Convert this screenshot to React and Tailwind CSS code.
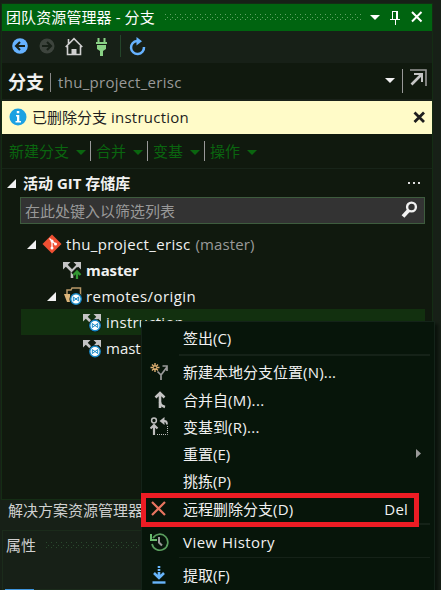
import React from "react";

function Grip({ id, className, color }) {
  return (
    <svg className={className} height="7" shapeRendering="crispEdges">
      <defs>
        <pattern id={id} width="5" height="7" patternUnits="userSpaceOnUse">
          <path d="M0 0h1v1h-1zM2 3h1v1h-1zM0 5h1v1h-1z" fill={color} />
        </pattern>
      </defs>
      <rect width="100%" height="7" fill={`url(#${id})`} />
    </svg>
  );
}

function Down({ className = "fill-[#f1f1f1]", w = 10 }) {
  return (
    <svg width={w} height="5" viewBox="0 0 10 5" className={`shrink-0 ${className}`}>
      <path d="M0 0h10L5 5z" />
    </svg>
  );
}

function Expander() {
  return (
    <svg width="9" height="9" className="shrink-0 fill-[#f1f1f1]">
      <path d="M9 0v9H0z" />
    </svg>
  );
}

function BranchArrows() {
  return (
    <g>
      <path d="M3 4l6 6M15 4l-6 6v7" stroke="#c4c4c4" strokeWidth="2.6" fill="none" />
      <path d="M0 1v7.500L7.500 1zM18 1v7.500L10.500 1z" fill="#c4c4c4" />
    </g>
  );
}

function RemoteBadge({ x, y }) {
  return (
    <g transform={`translate(${x} ${y})`}>
      <circle r="6.600" fill="#10190e" />
      <circle r="5.200" fill="#fff" stroke="#1688c7" strokeWidth="1.400" />
      <path d="M-2.700-2L0 0l2.700-2M-2.700 2L0 0l2.700 2M-2.700-2v4M2.700-2v4" stroke="#1688c7" strokeWidth="1" fill="none" />
    </g>
  );
}

function RemoteBranch() {
  return (
    <svg width="19" height="19" className="shrink-0">
      <BranchArrows />
      <RemoteBadge x={12} y={12.5} />
    </svg>
  );
}

function Action({ label, last, className }) {
  return (
    <div className={`flex items-center h-5 ${className} ${last ? "" : "border-r border-[#999]"}`}>
      <span className="mr-[7px]">{label}</span>
      <Down className="fill-[#0a650f] mt-[3px]" />
    </div>
  );
}

function Item({ icon, label, right, className = "h-[27px]" }) {
  return (
    <div className={`flex items-center shrink-0 ${className}`}>
      <div className="w-[41px] pl-[8px] shrink-0">{icon}</div>
      <span className="flex-1">{label}</span>
      {right}
    </div>
  );
}

function Separator({ className = "h-[2px]" }) {
  return <div className={`ml-[37px] mr-[4px] shrink-0 bg-[#152218] ${className}`} />;
}

function ContextMenu() {
  return (
    <div className="absolute left-[141px] top-[321px] w-[294px] h-[270px] bg-[#07150a] border border-[#142319] flex flex-col text-[#f1f1f1] shadow-[3px_3px_3px_#0a110b]">
      <Item label="签出(C)" className="h-[32px]" />
      <Separator />
      <Item
        className="h-[30px] pt-[2px]"
        label={<>新建本地分支位置<span className="tracking-[0.2px]">(N)...</span></>}
        icon={
          <svg width="20" height="18" fill="none">
            <path d="M5 0v9M.5 4.500h9M2 1.500l6 6M8 1.500l-6 6" stroke="#dcae70" strokeWidth="1.400" />
            <circle cx="5" cy="4.500" r="1.600" fill="#07150a" stroke="#dcae70" />
            <path d="M7.500 8.500L11 12v5M11 12l6-8M12.500 3H17v5" stroke="#999" strokeWidth="1.700" />
          </svg>
        }
      />
      <Item
        label={<>合并自<span className="tracking-[0.4px]">(M)...</span></>}
        icon={
          <svg width="20" height="18" fill="none" stroke="#c4c4c4">
            <path d="M10 2v15M5.500 6.500L10 2l4.500 4.500" strokeWidth="2.600" />
            <path d="M10 11c0 3 2 4 5 5" strokeWidth="2.400" />
          </svg>
        }
      />
      <Item
        label={<>变基到<span className="tracking-[0.3px]">(R)...</span></>}
        icon={
          <svg width="20" height="19" fill="none" stroke="#bebebe">
            <circle cx="4" cy="3.500" r="2.400" strokeWidth="1.500" />
            <path d="M4 18V8M.5 11.500L4 8l3.500 3.500" strokeWidth="2.200" />
            <path d="M12 4h2.500c2 0 2.500 1 2.500 3.500" strokeWidth="1.800" />
            <path d="M14.500 0v8L9.500 4z" fill="#bebebe" stroke="none" />
            <path d="M17.500 9v8.500H6" strokeDasharray="1 1" />
          </svg>
        }
      />
      <Item
        label="重置(E)"
        right={
          <svg width="5" height="9" className="fill-[#999] mr-[13px]">
            <path d="M0 0l5 4.500L0 9z" />
          </svg>
        }
      />
      <Item label="挑拣(P)" className="h-[28px]" />
      <Item
        label={<>远程删除分支<span className="tracking-[0.2px]">(D)</span></>}
        right={<span className="mr-[26px] tracking-[0.2px]">Del</span>}
        icon={
          <svg width="18" height="16" stroke="#e87560" strokeWidth="2.200">
            <path d="M2 1l13 13M15 1L2 14" />
          </svg>
        }
      />
      <Separator className="h-[2px] mt-[1px]" />
      <Item
        label={<span className="tracking-[0.45px]">View History</span>}
        className="h-[32px] pt-[1px]"
        icon={
          <svg width="20" height="20" fill="none">
            <path d="M3 6a8 8 0 1 1-1 6" stroke="#5a9e5e" strokeWidth="1.700" />
            <path d="M1 2v6h6" stroke="#6abd6e" strokeWidth="2" />
            <path d="M9 5v5.500l3 3" stroke="#999" strokeWidth="2" />
          </svg>
        }
      />
      <Separator className="h-[1px]" />
      <Item
        label="提取(F)"
        className="h-[34px]"
        icon={
          <svg width="18" height="19" className="mt-[-2px]" fill="none" stroke="#68b5fb">
            <path d="M9 1v2M9 4v2M9 7v5M4 8l5 5 5-5" strokeWidth="2.600" />
            <path d="M2.500 17.500h13" strokeWidth="2.400" />
          </svg>
        }
      />
    </div>
  );
}

export default function App() {
  return (
    <div className="relative w-[441px] h-[590px] overflow-hidden bg-[#172017] pl-[2px] pt-[4px] font-['Open_Sans','Noto_Sans_CJK_SC',sans-serif] text-[15px] leading-5 whitespace-nowrap">
      <section className="flex flex-col w-[430px] h-[495px] bg-[#10190e] outline outline-[#142d14]">
        <header className="flex items-center h-[27px] shrink-0 bg-[#006410] text-white pl-[4px] pr-[9px]">
          <span className="w-[159px] mt-[-2px] tracking-[0.1px]">团队资源管理器 - 分支</span>
          <Grip id="grip-title" className="w-[196px]" color="#5ea064" />
          <Down className="fill-white ml-[9px]" />
          <svg width="10" height="15" className="ml-[10px] mt-[-1px]" fill="none" stroke="#fff" shapeRendering="crispEdges">
            <path d="M2.500 9V1.500h5V9M0 9.500h10M5 10v5" />
            <path d="M7 1v8" strokeWidth="2" />
          </svg>
          <svg width="12" height="12" className="ml-[11px] mt-[-1px]" stroke="#fff" strokeWidth="2">
            <path d="M1 1l9.500 9.500M10.500 1L1 10.500" />
          </svg>
        </header>

        <div className="flex items-center h-[32px] shrink-0 bg-[#172017] pl-[10px] pb-[2px]">
          <svg width="16" height="16">
            <circle cx="8" cy="8" r="7.800" fill="#66b2ff" />
            <path d="M13 8H5M8 4L4 8l4 4" fill="none" stroke="#172017" strokeWidth="2.100" />
          </svg>
          <svg width="16" height="16" className="ml-[11px]">
            <circle cx="8" cy="8" r="7.500" fill="#3d443d" />
            <path d="M3 8h8M8 4l4 4-4 4" fill="none" stroke="#172017" strokeWidth="2.100" />
          </svg>
          <svg width="18" height="19" className="ml-[10px]" fill="none">
            <path d="M2.500 9v8.500h13V9M.7 10L9 1.700 17.300 10M3.500 7V2" stroke="#d0d0d0" strokeWidth="1.600" />
            <path d="M6.500 12h5v6h-5z" fill="#d0d0d0" />
          </svg>
          <svg width="11" height="19" className="ml-[13px]" fill="#89d185">
            <path d="M1.500 1h2v4h4V1h2v4H11v2H0V5h1.500zM1 8h9v4l-3 2v5H4v-5l-3-2z" />
          </svg>
          <div className="w-px h-[22px] ml-[13px] bg-[#24452a]" />
          <svg width="17" height="19" className="ml-[8px]" fill="none">
            <path d="M8 4a6.500 6.500 0 1 0 7 6" stroke="#66b2ff" strokeWidth="2.500" />
            <path d="M7.500 0v8.500L13 4.200z" fill="#66b2ff" />
          </svg>
        </div>

        <div className="flex items-center h-[36px] shrink-0 pl-[6px] pr-[5px] pt-[2px]">
          <span className="font-bold text-[18px] text-[#f1f1f1]">分支</span>
          <div className="w-px h-[19px] bg-[#888] ml-[6px] mr-[7px]" />
          <span className="text-[#999] tracking-[0.3px]">thu_project_erisc</span>
          <div className="flex-1" />
          <Down className="fill-[#f1f1f1] mt-[-3px]" />
          <div className="w-px h-[24px] bg-[#999] ml-[7px] mr-[7px] mt-[-2px]" />
          <svg width="17" height="18" className="mt-[-9px]" fill="none">
            <path d="M0 1h16v16" stroke="#999" strokeWidth="1.600" />
            <path d="M1.500 15.500L11 6" stroke="#c5c5c5" strokeWidth="2.600" />
            <path d="M4 5h8v8" stroke="#c5c5c5" strokeWidth="2" />
          </svg>
        </div>

        <div className="flex items-center h-[35px] shrink-0 border-t-2 border-[#192119] bg-[#fffbc8] text-[#1e1e1e] pl-[7px] pr-[6px] pb-[2px]">
          <svg width="18" height="18">
            <circle cx="9" cy="9" r="8.500" fill="#1ba1e2" />
            <path d="M7.800 3h2.500v2.200H7.800zM7 7h3.300v6H12v1.500H6.500V13H8V8.500H7z" fill="#fff" />
          </svg>
          <span className="ml-[5px] flex-1">已删除分支 <span className="tracking-[0.25px]">instruction</span></span>
          <svg width="13" height="13" className="mt-[1px]" stroke="#1e1e1e" strokeWidth="2.800">
            <path d="M1.500 1.500l9.500 9.500M11 1.500L1.500 11" />
          </svg>
        </div>

        <nav className="flex items-center h-[35px] shrink-0 text-[#0a650f] pl-[7px] pb-[1px] border-b border-[#182419]">
          <Action label="新建分支" className="w-[82px]" />
          <Action label="合并" className="w-[57px] pl-[5px]" />
          <Action label="变基" className="w-[57px] pl-[5px]" />
          <Action label="操作" last className="pl-[5px]" />
        </nav>

        <div className="flex items-center h-[28px] shrink-0 pl-[5px] pr-[11px] text-[#f1f1f1]">
          <Expander />
          <span className="ml-[7px] flex-1 font-bold">活动 GIT 存储库</span>
          <svg width="13" height="2" fill="#ddd">
            <path d="M0 0h2v2H0zM5 0h2v2H5zM10 0h2v2h-2z" />
          </svg>
        </div>

        <div className="flex items-center h-[27px] w-[405px] shrink-0 ml-[18px] border border-[#3e5c3e] bg-[#333] text-[#999] pl-[4px] pr-[6px]">
          <span className="flex-1">在此处键入以筛选列表</span>
          <svg width="17" height="18" className="mt-[-1px]" fill="none" stroke="#f1f1f1">
            <circle cx="10.500" cy="6" r="4.400" strokeWidth="2.400" />
            <path d="M7.500 9.500L2 15.500" strokeWidth="3.800" />
          </svg>
        </div>

        <div className="pt-[7px] text-[#f1f1f1]">
          <div className="flex items-center h-[26px] pl-[25px]">
            <Expander />
            <svg width="20" height="20" className="ml-[6px]">
              <path d="M10 .5L19.500 10 10 19.500.5 10z" fill="#f05033" />
              <path d="M7.500 4.500L10 7v7M10 7l4 3.500" stroke="#fff" strokeWidth="1.200" fill="none" />
              <circle cx="10" cy="7" r="1.500" fill="#fff" />
              <circle cx="10" cy="14" r="1.500" fill="#fff" />
              <circle cx="13.500" cy="10" r="1.500" fill="#fff" />
            </svg>
            <span className="ml-[4px] tracking-[0.35px]">thu_project_erisc</span>
            <span className="ml-[5px] text-[#999] tracking-[0.1px]">(master)</span>
          </div>
          <div className="flex items-center h-[26px] pl-[61px]">
            <svg width="19" height="19" className="shrink-0">
              <BranchArrows />
              <path d="M14 18v-7M10 13.500L14 9.500l4 4" stroke="#10190e" strokeWidth="5" fill="none" />
              <path d="M14 18v-7M10.500 14L14 10.500l3.500 3.500" stroke="#339933" strokeWidth="2.300" fill="none" />
            </svg>
            <span className="ml-[4px] font-bold tracking-[-0.1px]">master</span>
          </div>
          <div className="flex items-center h-[26px] pl-[45px]">
            <Expander />
            <svg width="19" height="19" className="ml-[8px]" fill="none">
              <path d="M3 9V3h4l1-2h8.500v12H14" stroke="#b89868" strokeWidth="1.500" />
              <path d="M0 7h6l1 8H3z" fill="#dcb67a" />
              <RemoteBadge x={12} y={12} />
            </svg>
            <span className="ml-[3px] tracking-[0.45px]">remotes/origin</span>
          </div>
          <div className="flex items-center h-[26px] ml-[19px] mr-[7px] pl-[62px] bg-[#12300f]">
            <RemoteBranch />
            <span className="ml-[4px] tracking-[0.25px]">instruction</span>
          </div>
          <div className="flex items-center h-[26px] pl-[81px]">
            <RemoteBranch />
            <span className="ml-[4px]">master</span>
          </div>
        </div>
      </section>

      <div className="h-[31px] pl-[6px] pt-[1px] text-[#d0d0d0]">解决方案资源管理器</div>
      <section className="w-[430px] h-[60px] border border-[#1b2b1b]">
        <div className="flex items-center h-[28px] pl-[3px] text-[#d0d0d0]">
          <span>属性</span>
          <Grip id="grip-properties" className="ml-[10px] w-[300px]" color="#294a2d" />
        </div>
        <div className="mt-[30px] ml-[2px] h-px w-[29px] bg-[#3f96df]" />
      </section>

      <ContextMenu />
      <div className="absolute left-[141px] top-[493px] w-[278px] h-[34px] border-[5px] border-[#ed1c24]" />
    </div>
  );
}
